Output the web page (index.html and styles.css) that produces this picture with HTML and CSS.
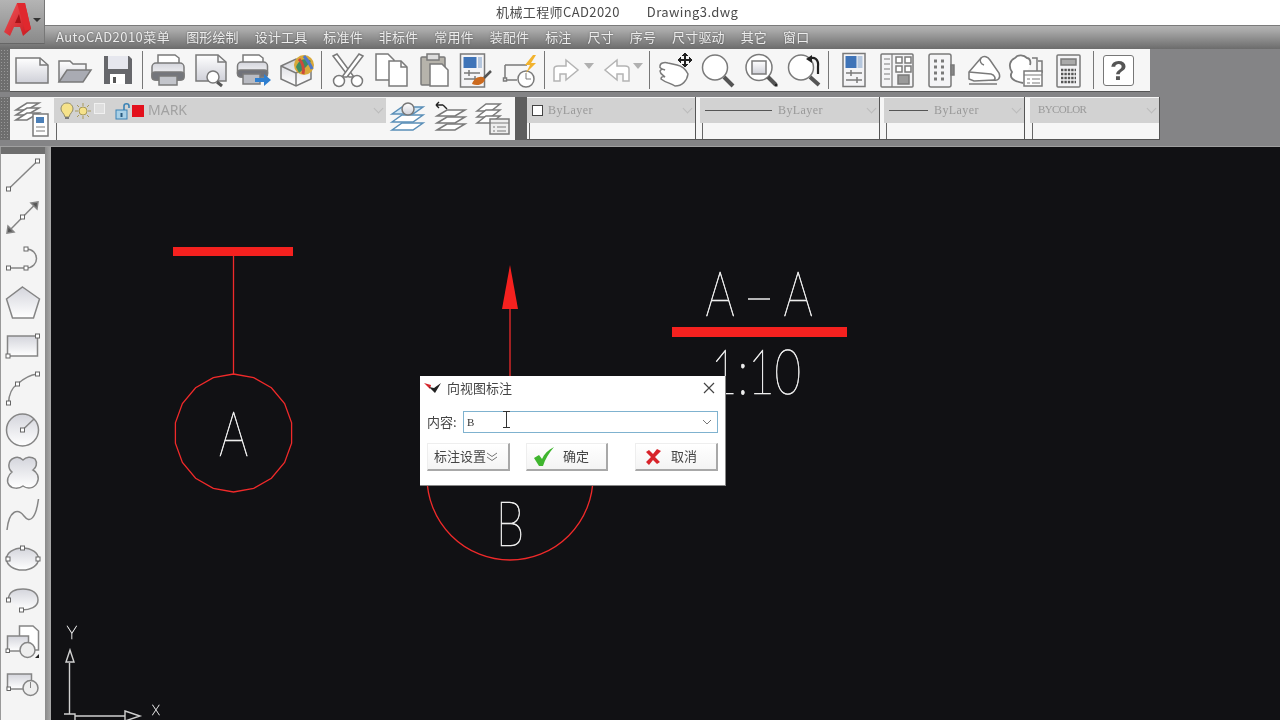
FILE: index.html
```html
<!DOCTYPE html>
<html lang="en">
<head>
    <meta charset="UTF-8">
    <title>机械工程师CAD2020</title>
    <link rel="stylesheet" href="styles.css">
</head>
<body>
<svg class="defs" width="0" height="0">
    <defs>
        <linearGradient id="sheet" x1="0" y1="0" x2="0" y2="1"><stop offset="0" stop-color="#fff"/><stop offset="1" stop-color="#cfd0d8"/></linearGradient>
        <linearGradient id="sheet2" x1="0" y1="0" x2="0" y2="1"><stop offset="0" stop-color="#d4d5dc"/><stop offset="1" stop-color="#fff"/></linearGradient>
        <linearGradient id="logo" x1="0" y1="0" x2="1" y2="1"><stop offset="0" stop-color="#f0565a"/><stop offset="1" stop-color="#c8181f"/></linearGradient>
    </defs>
</svg>
<div class="app">
    <div class="appbtn">
        <svg width="36" height="42" viewBox="0 0 36 42">
            <path d="M2 31L15 2H23L29 28L21 35L18 26H12L8 35Z" fill="url(#logo)"/>
            <path d="M15 2H23L29 28L23 30Z" fill="#e0282e"/>
            <path d="M13 22L17 13L19 22Z" fill="#a51319"/>
        </svg>
        <span class="appbtn-arrow"></span>
    </div>
    <header class="titlebar">
        <span>机械工程师CAD2020</span>
        <span>Drawing3.dwg</span>
    </header>
    <nav class="menubar">
        <span class="menu-first">AutoCAD2010菜单</span><span>图形绘制</span><span>设计工具</span><span>标准件</span><span>非标件</span><span>常用件</span><span>装配件</span><span>标注</span><span>尺寸</span><span>序号</span><span>尺寸驱动</span><span>其它</span><span>窗口</span>
    </nav>

    <div class="toolrow">
        <div class="grip"></div>
        <div class="toolbar tb-main">
            <!-- new -->
            <span class="tool"><svg class="ic" viewBox="0 0 34 34"><path d="M1 5H25L33 12V30H1Z" fill="url(#sheet)"/><path d="M25 5V12H33"/></svg></span>
            <!-- open -->
            <span class="tool"><svg class="ic" viewBox="0 0 34 34"><path d="M1 29V8H12L15 11H28V17" fill="url(#sheet)"/><path d="M1 29L9 17H33L25 29Z" fill="#a9abb3"/></svg></span>
            <!-- save -->
            <span class="tool"><svg viewBox="0 0 34 34"><path d="M3 3H28L31 6V31H3Z" fill="#66676b"/><rect x="7" y="3" width="20" height="13" fill="#e6e7ee"/><rect x="9" y="21" width="15" height="10" fill="#fff"/><rect x="12" y="24" width="3" height="6" fill="#555"/></svg></span>
            <span class="sep"></span>
            <!-- print -->
            <span class="tool"><svg class="ic" viewBox="0 0 34 34"><path d="M7 11V2H24L28 5V11" fill="#fff"/><rect x="1" y="10" width="32" height="17" rx="4" fill="url(#sheet2)"/><rect x="1" y="19" width="32" height="8" rx="3" fill="#74767c"/><rect x="8" y="23" width="18" height="9" fill="#c3c5cb"/></svg></span>
            <!-- preview -->
            <span class="tool"><svg class="ic" viewBox="0 0 34 34"><path d="M2 2H24L32 9V28H2Z" fill="url(#sheet)"/><path d="M24 2V9H32"/><circle cx="19" cy="24" r="6" fill="#fff"/><path d="M23 29L28 33" stroke="#555" stroke-width="3"/></svg></span>
            <!-- plot -->
            <span class="tool"><svg class="ic" viewBox="0 0 34 34"><path d="M6 10V2H22L26 5V10" fill="#fff"/><rect x="0.5" y="9" width="30" height="15" rx="4" fill="url(#sheet2)"/><rect x="0.5" y="17" width="30" height="7" rx="3" fill="#70727a"/><rect x="6" y="21" width="17" height="10" fill="#b9bbc2"/><path d="M18 25H27V21L34 27L27 33V29H18Z" fill="#2f7fd0" stroke="none"/></svg></span>
            <!-- 3d publish -->
            <span class="tool"><svg class="ic" viewBox="0 0 34 34"><path d="M1 13L16 6L31 13V26L16 33L1 26Z" fill="url(#sheet2)"/><path d="M1 13L16 20V33M16 20L31 13"/><circle cx="24" cy="12" r="10" fill="#d9a93a" stroke="none"/><path d="M16 14C20 4 28 6 31 8L26 14L19 20Z" fill="#3f8d63" stroke="none"/><path d="M19 6C23 10 24 16 23 21" stroke="#cc4a3c" stroke-width="3"/><path d="M24 3C28 8 31 13 32 16" stroke="#4f78c9" stroke-width="3"/></svg></span>
            <span class="sep sep-w"></span>
            <!-- cut -->
            <span class="tool"><svg class="ic" viewBox="0 0 34 34"><path d="M2 3L6 1L23 24H18Z" fill="#fff"/><path d="M32 3L28 1L11 24H16Z" fill="#fff"/><circle cx="8" cy="28" r="5.5" fill="#fff"/><circle cx="26" cy="28" r="5.5" fill="#fff"/></svg></span>
            <!-- copy -->
            <span class="tool"><svg class="ic" viewBox="0 0 34 34"><path d="M2 1H14L20 7V27H2Z" fill="#fff"/><path d="M15 8H27L33 14V33H15Z" fill="#fff"/><path d="M27 8V14H33"/></svg></span>
            <!-- paste -->
            <span class="tool"><svg class="ic" viewBox="0 0 34 34"><rect x="4" y="4" width="24" height="28" rx="1" fill="#b6b3ab"/><rect x="10" y="1" width="12" height="6" fill="#ddd"/><path d="M13 11H25L31 17V33H13Z" fill="#fff"/></svg></span>
            <!-- match properties -->
            <span class="tool"><svg class="ic" viewBox="0 0 34 34"><rect x="0.5" y="1" width="24" height="33" fill="#f4f4f6"/><rect x="3.5" y="4" width="13" height="11" fill="#3f74b8" stroke="none"/><rect x="18" y="4" width="4" height="11" fill="#b5c7de" stroke="none"/><path d="M4 20H20M4 26H20M9 17V23M15 23V29"/><path d="M12 31C14 25 20 22 25 25C25 30 19 34 12 31Z" fill="#cc6a1e" stroke="none"/><path d="M24 25L31 18" stroke="#555" stroke-width="2.5"/></svg></span>
            <!-- block -->
            <span class="tool"><svg class="ic" viewBox="0 0 34 34"><path d="M2 12H24M2 12V27H14"/><rect x="0.5" y="25" width="3" height="3" fill="#fff"/><circle cx="23" cy="26" r="8" fill="#fff"/><path d="M23 20V26H28" stroke-width="1"/><path d="M30 2L22 12H27L23 20L33 10H28L33 2Z" fill="#f2b32e" stroke="none"/></svg></span>
            <span class="sep"></span>
            <!-- redo / undo -->
            <span class="tool tool-sm"><svg class="ic ic-off" viewBox="0 0 34 34"><path d="M4 28V16C4 14 6 13 8 13H16V7L28 17L16 27V21H10V28Z" fill="#fff"/></svg></span>
            <span class="drop"></span>
            <span class="tool tool-sm"><svg class="ic ic-off" viewBox="0 0 34 34"><path d="M30 28V16C30 14 28 13 26 13H18V7L6 17L18 27V21H24V28Z" fill="#fff"/></svg></span>
            <span class="drop"></span>
            <span class="sep"></span>
            <!-- pan -->
            <span class="tool"><svg class="ic" viewBox="0 0 34 34"><path d="M2 13C2 10 6 9 10 10L19 12C24 13 28 17 30 21C29 28 24 33 17 33C13 30 8 30 3 26C3 24 5 23 7 24C5 22 2 21 2 18C3 16 5 16 7 17C4 16 1 15 2 13Z" fill="#fff"/><path d="M27 0V14M20 7H34" stroke="#222" stroke-width="2"/><path d="M24 3L27 0L30 3M24 11L27 14L30 11M23 4L20 7L23 10M31 4L34 7L31 10" stroke="#222" fill="#222" stroke-width="1"/></svg></span>
            <!-- zoom -->
            <span class="tool"><svg class="ic" viewBox="0 0 34 34"><circle cx="14" cy="14.5" r="12.5" fill="#fff"/><path d="M23 24L32 33" stroke="#555" stroke-width="4"/></svg></span>
            <!-- zoom window -->
            <span class="tool"><svg class="ic" viewBox="0 0 34 34"><circle cx="15" cy="14.5" r="13" fill="#fff"/><rect x="8" y="8" width="14" height="13" fill="url(#sheet)"/><path d="M24 24L32 32" stroke="#555" stroke-width="4"/><rect x="31" y="31" width="2.5" height="2.5" fill="#222" stroke="none"/></svg></span>
            <!-- zoom previous -->
            <span class="tool"><svg class="ic" viewBox="0 0 34 34"><circle cx="14" cy="14.5" r="12.5" fill="#fff"/><path d="M23 24L32 32" stroke="#555" stroke-width="4"/><path d="M22 6C27 3 32 6 31 14V21" stroke="#222" stroke-width="2.2"/><path d="M25 2L19 6L25 10Z" fill="#222" stroke="none"/></svg></span>
            <span class="sep"></span>
            <!-- properties -->
            <span class="tool"><svg class="ic" viewBox="0 0 34 34"><rect x="6" y="0.5" width="22" height="33" fill="#f4f4f6"/><rect x="8.5" y="3" width="11" height="12" fill="#3f74b8" stroke="none"/><rect x="20.5" y="3" width="5" height="12" fill="#b5c7de" stroke="none"/><path d="M9 20H25M9 27H25M14 17V23M20 24V30"/></svg></span>
            <!-- design center -->
            <span class="tool"><svg class="ic" viewBox="0 0 34 34"><rect x="1" y="1" width="32" height="33" rx="1" fill="#f4f4f6"/><path d="M12 1V34M4 6H10M4 11H10M4 16H10M4 21H10M4 26H10" stroke-width="1.2"/><rect x="16" y="4" width="6" height="6" fill="#fff"/><rect x="25" y="4" width="6" height="6" fill="#fff"/><rect x="16" y="13" width="6" height="6" fill="#fff"/><rect x="25" y="13" width="6" height="6" fill="#fff"/><rect x="18" y="22" width="11" height="9" fill="#9a9a9a"/></svg></span>
            <!-- tool palettes -->
            <span class="tool"><svg class="ic" viewBox="0 0 34 34"><rect x="6" y="1" width="22" height="33" rx="2" fill="#f4f4f6"/><path d="M28 12h3v10h-3z" fill="#888"/><path d="M11 8h3M18 8h3M11 14h3M18 14h3M11 20h3M18 20h3M11 26h3M18 26h3" stroke-width="3"/></svg></span>
            <!-- sheet set -->
            <span class="tool"><svg class="ic" viewBox="0 0 34 34"><path d="M3 19L15 5C18 2 22 4 24 7L33 20C35 25 32 28 28 27L8 28L3 26Z" fill="#fff"/><path d="M3 19L25 21C29 22 30 26 28 27M15 5C13 8 15 11 18 12"/><path d="M3 31H31"/></svg></span>
            <!-- markup -->
            <span class="tool"><svg class="ic" viewBox="0 0 34 34"><path d="M14 30C3 28 0 24 3 19C-1 13 1 7 6 5C9 1 15 2 18 5C21 5 22 9 21 12" fill="#fff" stroke-width="1.8"/><path d="M23 5H28V20M29 8H33V20"/><rect x="15" y="18" width="18" height="15" fill="#fff"/><path d="M15 22H33M18 26H21M23 26H31M18 30H21M23 30H31" stroke-width="1.2"/></svg></span>
            <!-- calculator -->
            <span class="tool"><svg class="ic" viewBox="0 0 34 34"><rect x="5" y="2" width="23" height="32" rx="1" fill="#f4f4f6"/><rect x="9" y="6" width="15" height="6" fill="#aaa"/><path d="M9 17H24M9 21H24M9 25H24M9 29H24" stroke="#555" stroke-width="2.4" stroke-dasharray="2.4 1"/></svg></span>
            <span class="sep"></span>
            <!-- help -->
            <span class="tool"><span class="help">?</span></span>
        </div>
    </div>

    <div class="toolrow toolrow-2">
        <div class="grip"></div>
        <div class="toolbar tb-layer">
            <span class="tool-tight"><svg class="ic" viewBox="0 0 34 34"><path d="M1 8L12 1H24L12 8Z" fill="#fff"/><path d="M1 13L12 6H24L12 13Z" fill="#fff"/><path d="M1 18L12 11H24L12 18Z" fill="#fff"/><rect x="18" y="12" width="15" height="22" fill="#fff"/><rect x="21" y="15" width="8" height="6" fill="#4c80b8" stroke="none"/><path d="M21 25H30M21 29H30" stroke-width="1.2"/></svg></span>
            <div class="combo combo-layer">
                <div class="combo-top">
                    <svg class="flag" width="16" height="18" viewBox="0 0 16 18"><path d="M8 1C12 1 14 4 14 7C14 10 11 11 10 15H6C5 11 2 10 2 7C2 4 4 1 8 1Z" fill="#f6e28a" stroke="#8f8a6a"/><rect x="6" y="15" width="4" height="2" fill="#777"/></svg>
                    <svg class="flag" width="16" height="18" viewBox="0 0 16 18"><circle cx="8" cy="9" r="4" fill="#f6e28a" stroke="#a89a5a"/><path d="M8 1V4M8 14V17M0 9H3M13 9H16M2 3L4 5M12 13L14 15M14 3L12 5M4 13L2 15" stroke="#a89a5a"/></svg>
                    <span class="flag-box"></span>
                    <svg class="flag flag-lock" width="16" height="18" viewBox="0 0 16 18"><path d="M9 8V4C9 1 14 1 14 4V6" fill="none" stroke="#3a82b5" stroke-width="1.6"/><rect x="1" y="8" width="11" height="9" fill="#a9d0e6" stroke="#3a82b5"/><rect x="5.5" y="11" width="2" height="4" fill="#28597d"/></svg>
                    <span class="swatch-red"></span>
                    <span class="layer-name">MARK</span>
                    <span class="chev"></span>
                </div>
                <div class="combo-low"></div>
            </div>
            <span class="tool-tight tt-first"><svg class="ic ic-blue" viewBox="0 0 34 34"><path d="M2 12L12 5H33L23 12Z" fill="#cfe6f6"/><path d="M2 20L12 13H33L23 20Z" fill="#fff"/><path d="M2 28L12 21H33L23 28Z" fill="#fff"/><circle cx="18" cy="7" r="6" fill="url(#sheet)" stroke="#777"/></svg></span>
            <span class="tool-tight"><svg class="ic" viewBox="0 0 34 34"><path d="M4 14L14 8H32L22 14Z" fill="#fff"/><path d="M4 21L14 15H32L22 21Z" fill="#fff"/><path d="M4 28L14 22H32L22 28Z" fill="#fff"/><path d="M3 3H10M3 3L6 0M3 3L6 6M10 3L14 7" stroke="#222" stroke-width="1.4"/></svg></span>
            <span class="tool-tight"><svg class="ic" viewBox="0 0 34 34"><path d="M1 9L10 2H24L15 9Z" fill="#fff"/><path d="M1 15L10 8H24L15 15Z" fill="#fff"/><path d="M1 21L10 14H24L15 21Z" fill="#fff"/><rect x="14" y="17" width="19" height="15" fill="#eee"/><path d="M14 21H33M17 25H19M21 25H30M17 29H19M21 29H30" stroke-width="1.2"/></svg></span>
        </div>
        <div class="grip grip-dark"></div>
        <div class="combos">
            <div class="combo combo-1">
                <div class="combo-top"><span class="box"></span><span class="combo-text">ByLayer</span><span class="chev"></span></div>
                <div class="combo-low"></div>
            </div>
            <div class="combo combo-2">
                <div class="combo-top"><span class="ltype ltype-long"></span><span class="combo-text">ByLayer</span><span class="chev"></span></div>
                <div class="combo-low"></div>
            </div>
            <div class="combo combo-3">
                <div class="combo-top"><span class="ltype ltype-short"></span><span class="combo-text">ByLayer</span><span class="chev"></span></div>
                <div class="combo-low"></div>
            </div>
            <div class="combo combo-4">
                <div class="combo-top"><span class="combo-text combo-text-big">BYCOLOR</span><span class="chev"></span></div>
                <div class="combo-low"></div>
            </div>
        </div>
    </div>

    <div class="workspace">
        <aside class="sidebar">
            <div class="side-grip"></div>
            <span class="side-tool"><svg class="ic ic-thin" viewBox="0 0 34 34"><path d="M2.5 31L31.5 3"/><rect class="h" x="0.5" y="29" width="4" height="4"/><rect class="h" x="29.5" y="1" width="4" height="4"/></svg></span>
            <span class="side-tool"><svg class="ic ic-thin" viewBox="0 0 34 34"><path d="M2 31L31.5 1"/><path d="M1 32L2 25L8 31Z" fill="#555"/><path d="M32 1L31 8L25 2Z" fill="#555"/><rect class="h" x="14.5" y="14" width="4" height="4"/></svg></span>
            <span class="side-tool"><svg class="ic ic-thin" viewBox="0 0 34 34"><path d="M2.5 25H20C34 25 34 6 20 6"/><rect class="h" x="0.5" y="23" width="4" height="4"/><rect class="h" x="18" y="23" width="4" height="4"/><rect class="h" x="18" y="4" width="4" height="4"/></svg></span>
            <span class="side-tool"><svg class="ic ic-thin" viewBox="0 0 34 34"><path d="M16.5 1L33.5 13L27.5 32H6.5L0.5 13Z" fill="url(#sheet2)"/></svg></span>
            <span class="side-tool"><svg class="ic ic-thin" viewBox="0 0 34 34"><rect x="1.5" y="8" width="30" height="20" fill="url(#sheet2)"/><rect class="h" x="29.5" y="6" width="4" height="4"/><rect class="h" x="0" y="26" width="4" height="4"/></svg></span>
            <span class="side-tool"><svg class="ic ic-thin" viewBox="0 0 34 34"><path d="M2.5 32C3 22 7 16 11.5 13C17 8 23 4 31.5 3"/><rect class="h" x="0.5" y="30" width="4" height="4"/><rect class="h" x="9.5" y="11" width="4" height="4"/><rect class="h" x="29.5" y="1" width="4" height="4"/></svg></span>
            <span class="side-tool"><svg class="ic ic-thin" viewBox="0 0 34 34"><circle cx="16.5" cy="17" r="16" fill="url(#sheet2)"/><path d="M16.5 17L28 6"/><rect class="h" x="14.5" y="15" width="4" height="4"/></svg></span>
            <span class="side-tool"><svg class="ic ic-thin" viewBox="0 0 34 34"><path d="M8 2C12 0 15 2 17 4C20 1 25 0 29 3C32 7 30 12 27 14C31 16 34 21 31 27C28 33 21 33 17 30C13 33 6 33 3 29C0 25 2 19 6 16C2 13 1 5 8 2Z" fill="url(#sheet2)"/></svg></span>
            <span class="side-tool"><svg class="ic ic-thin" viewBox="0 0 34 34"><path d="M1 32C3 12 12 10 18 18C24 26 30 20 32.5 1"/></svg></span>
            <span class="side-tool"><svg class="ic ic-thin" viewBox="0 0 34 34"><ellipse cx="16.5" cy="18" rx="16" ry="11" fill="url(#sheet2)"/><rect class="h" x="14.5" y="5" width="4" height="4"/><rect class="h" x="0" y="16" width="4" height="4"/><rect class="h" x="30" y="16" width="4" height="4"/></svg></span>
            <span class="side-tool"><svg class="ic ic-thin" viewBox="0 0 34 34"><path d="M2.5 17C2 8 10 6 17 6C26 6 32 10 32 17C32 24 24 27 15.5 27" fill="url(#sheet2)"/><rect class="h" x="0.5" y="15" width="4" height="4"/><rect class="h" x="13.5" y="25" width="4" height="4"/></svg></span>
            <span class="side-tool"><svg class="ic ic-thin" viewBox="0 0 34 34"><path d="M13.5 0H27L32.5 5V24H13.5Z" fill="#fff"/><rect x="1.5" y="10" width="21" height="15" fill="url(#sheet2)"/><circle cx="21.5" cy="24" r="7.5" fill="#eee"/><rect class="h" x="0" y="23" width="3.5" height="3.5"/><path d="M29 32H33V28Z" fill="#222" stroke="none"/></svg></span>
            <span class="side-tool"><svg class="ic ic-thin" viewBox="0 0 34 34"><rect x="1.5" y="6" width="24" height="15" fill="url(#sheet2)"/><circle cx="24.5" cy="20" r="7.5" fill="#eee"/><path d="M24.5 20V14" stroke-width="1"/><rect class="h" x="1" y="19" width="3.5" height="3.5"/></svg></span>
        </aside>
        <div class="rail"></div>
        <main class="canvas">
            <svg class="drawing" viewBox="51 147 1229 573">
                <!-- section A -->
                <rect class="red-fill" x="173" y="247" width="120" height="9"/>
                <path class="red" d="M233.5 256V375"/>
                <polygon class="red" transform="translate(233.5 433)" points="0,-59 20.2,-55.4 37.9,-45.2 51.1,-29.5 58.1,-10.2 58.1,10.2 51.1,29.5 37.9,45.2 20.2,55.4 0,59 -20.2,55.4 -37.9,45.2 -51.1,29.5 -58.1,10.2 -58.1,-10.2 -51.1,-29.5 -37.9,-45.2 -20.2,-55.4"/>
                <text class="cad" transform="translate(233.5 456) scale(.74 1)">A</text>
                <!-- view B -->
                <path class="red-fill" d="M510 265L518 309H502Z"/>
                <path class="red" d="M510 309V380"/>
                <circle class="red" cx="510" cy="477" r="83"/>
                <text class="cad" transform="translate(510 546) scale(.74 1)">B</text>
                <!-- A-A label -->
                <text class="cad" transform="translate(720 316) scale(.74 1)">A</text>
                <path class="white" d="M748 299H770"/>
                <text class="cad" transform="translate(798 316) scale(.74 1)">A</text>
                <rect class="red-fill" x="672" y="327" width="175" height="10"/>
                <text class="cad" transform="translate(756 394) scale(.74 1)">1:10</text>
                <!-- ucs -->
                <text class="cad cad-sm" x="72" y="639">Y</text>
                <path class="ucs" d="M69.5 663V714M66 662L70 650L74 662ZM64 714H75V720M75 716H125M125 711L140 716L125 721Z"/>
                <text class="cad cad-sm cad-x" x="156" y="715">X</text>
            </svg>
            <section class="dialog">
                <div class="dlg-title">
                    <svg width="18" height="12" viewBox="0 0 18 12"><path d="M0 1L7 3L6 7Z" fill="#d6242a"/><path d="M5 5L10 6L17 1L11 11Z" fill="#222"/></svg>
                    <span>向视图标注</span>
                    <svg class="dlg-close" width="12" height="12" viewBox="0 0 12 12"><path d="M1 1L11 11M11 1L1 11" stroke="#444" stroke-width="1.2"/></svg>
                </div>
                <div class="dlg-row">
                    <label>内容:</label>
                    <div class="dlg-input">
                        <span class="dlg-value">B</span>
                        <svg class="ibeam" width="9" height="17" viewBox="0 0 9 17"><path d="M1 .5H8M4.5 .5V16.5M1 16.5H8" stroke="#333" fill="none"/></svg>
                        <svg class="dlg-chev" width="10" height="6" viewBox="0 0 10 6"><path d="M1 1L5 5L9 1" stroke="#777" fill="none"/></svg>
                    </div>
                </div>
                <div class="dlg-btns">
                    <div class="btn btn-set"><span class="btn-label">标注设置</span><svg width="12" height="10" viewBox="0 0 12 10"><path d="M1 1L6 4.5L11 1M1 5L6 8.5L11 5" stroke="#777" fill="none"/></svg></div>
                    <div class="btn btn-ok"><svg width="20" height="19" viewBox="0 0 20 19"><path d="M0 11L5 8L8 12C10 7 14 3 20 0C15 6 11 12 9 19H5Z" fill="#3fb52e"/></svg><span class="btn-label">确定</span></div>
                    <div class="btn btn-cancel"><svg width="16" height="16" viewBox="0 0 16 16"><path d="M1 3L4 1L8 5L12 0L16 2L10 8L15 13L12 15L8 11L4 16L1 13L6 8Z" fill="#d8232a"/></svg><span class="btn-label">取消</span></div>
                </div>
            </section>
        </main>
    </div>
</div>
</body>
</html>
```

FILE: styles.css
```css
* {
    box-sizing: border-box;
}
html, body {
    margin: 0;
    padding: 0;
}
body {
    width: 1280px;
    height: 720px;
    overflow: hidden;
    background: #111114;
    font-family: "Noto Sans CJK SC", "Noto Sans", sans-serif;
}
.defs {
    position: absolute;
}
.app {
    position: relative;
    display: flex;
    flex-direction: column;
    width: 1280px;
    height: 720px;
    background: #848486;
    filter: blur(0.5px);
}

/* title + menu */
.appbtn {
    position: absolute;
    left: 0;
    top: 0;
    width: 45px;
    height: 44px;
    padding: 1px 0 0 2px;
    background: linear-gradient(#b4b4b4, #8a8a8a);
    border-right: 1px solid #777;
    border-bottom: 1px solid #666;
}
.appbtn-arrow {
    position: absolute;
    left: 33px;
    top: 18px;
    border: 4px solid transparent;
    border-top: 4px solid #333;
}
.titlebar {
    display: flex;
    justify-content: flex-start;
    gap: 27px;
    height: 26px;
    padding: 2px 0 0 496px;
    background: #fff;
    border-bottom: 1px solid #7a7a7a;
    color: #4a4a4a;
    font-size: 13px;
    line-height: 20px;
    letter-spacing: 0.4px;
    white-space: nowrap;
}
.menubar {
    display: flex;
    gap: 16px;
    height: 23px;
    padding-left: 56px;
    background: linear-gradient(#b2b2b2, #a8a8a8 20%, #6c6c6c);
    color: #ececec;
    font-size: 13px;
    line-height: 22px;
    letter-spacing: 0.15px;
    text-shadow: 0 0 2px #555;
    white-space: nowrap;
}
.menu-first {
    letter-spacing: 0.45px;
}

/* toolbars */
.toolrow {
    display: flex;
    height: 48px;
    padding-bottom: 5px;
}
.toolrow-2 {
    height: 50px;
    padding-bottom: 6px;
    border-bottom: 1px solid #a0a0a0;
}
.grip {
    width: 10px;
    background: #6e6e6e;
    background-image: radial-gradient(#999 40%, transparent 45%);
    background-size: 3px 3px;
}
.grip-dark {
    width: 12px;
    background: #5e5e5e;
}
.toolbar {
    display: flex;
    align-items: center;
    background: #f6f6f6;
}
.tb-main {
    width: 1140px;
    border-bottom: 1px solid #555;
}
.tb-layer {
    width: 505px;
    padding-left: 5px;
}
.tool {
    display: flex;
    justify-content: center;
    width: 43px;
}
.tool svg, .tool-tight svg, .side-tool svg {
    display: block;
    width: 34px;
    height: 34px;
    overflow: visible;
}
.tool-sm {
    width: 37px;
}
.tool-tight {
    margin-left: 9px;
}
.tool-tight:first-child {
    margin-left: 0;
}
.tt-first {
    margin-left: 4px;
}
.ic {
    fill: none;
    stroke: #7a7a7a;
    stroke-width: 1.5;
}
.ic-thin {
    stroke: #858585;
    stroke-width: 1.5;
}
.ic-thin .h {
    fill: #fff;
    stroke: #666;
    stroke-width: 1;
}
.ic-off {
    stroke: #b4b4b4;
}
.ic-blue {
    stroke: #5a8fb8;
}
.sep {
    width: 1px;
    height: 38px;
    margin: 0 3px;
    background: #777;
}
.sep-w {
    margin: 0 4px 0 3px;
}
.drop {
    width: 0;
    height: 0;
    margin: -8px 3px 0 -1px;
    border: 5px solid transparent;
    border-top: 6px solid #b0b0b0;
    border-bottom: 0;
}
.help {
    display: block;
    width: 31px;
    height: 31px;
    border: 1.5px solid #777;
    border-radius: 3px;
    background: #fff;
    color: #555;
    font-family: "Liberation Sans", sans-serif;
    font-size: 28px;
    font-weight: bold;
    line-height: 29px;
    text-align: center;
}

/* combos */
.combos {
    display: flex;
    width: 633px;
    background: #f6f6f6;
    border-right: 1px solid #555;
    border-bottom: 1px solid #555;
}
.combo {
    flex: none;
    display: flex;
    flex-direction: column;
    height: 100%;
}
.combo-layer {
    width: 332px;
    margin-left: 5px;
}
.combo-1, .combo-2, .combo-3 {
    border-right: 1px solid #555;
}
.combo-1 {
    width: 169px;
}
.combo-2 {
    width: 180px;
    margin-left: 4px;
}
.combo-3 {
    width: 141px;
    margin-left: 4px;
}
.combo-4 {
    width: 129px;
    margin-left: 5px;
}
.combo-top {
    display: flex;
    align-items: center;
    flex: none;
    height: 25px;
    margin-top: 1px;
    padding-left: 5px;
    background: #d2d2d2;
}
.combo-low {
    flex: 1;
    margin-left: 2px;
    border-left: 1px solid #666;
}
.chev {
    width: 7px;
    height: 7px;
    margin: -5px 4px 0 auto;
    border-right: 1px solid #bbb;
    border-bottom: 1px solid #bbb;
    transform: rotate(45deg);
}
.combo-text {
    color: #999;
    font-family: "Liberation Serif", "DejaVu Serif", serif;
    font-size: 12px;
    letter-spacing: 0.4px;
}
.combo-text-big {
    margin: -3px 0 0 3px;
    font-size: 11px;
    letter-spacing: -0.6px;
}
.box {
    width: 11px;
    height: 11px;
    margin-right: 5px;
    background: #fff;
    border: 1px solid #444;
}
.ltype {
    height: 1px;
    margin-right: 6px;
    background: #555;
}
.ltype-long {
    width: 67px;
}
.ltype-short {
    width: 39px;
}
.flag {
    flex: none;
}
.flag-box {
    flex: none;
    width: 11px;
    height: 11px;
    margin: -4px 8px 0 3px;
    background: #dedede;
    border: 1px solid #f0f0f0;
}
.flag-lock {
    margin-left: 2px;
}
.swatch-red {
    flex: none;
    width: 12px;
    height: 12px;
    margin-left: 1px;
    background: #e3101c;
}
.layer-name {
    margin: -2px 0 0 4px;
    color: #a2a2a2;
    font-family: "Noto Sans", sans-serif;
    font-size: 14px;
}

/* workspace */
.workspace {
    flex: 1;
    display: flex;
    min-height: 0;
}
.sidebar {
    display: flex;
    flex-direction: column;
    flex: none;
    width: 45px;
    background: #f4f4f4;
    border-left: 1px solid #999;
}
.side-grip {
    flex: none;
    height: 7px;
    background: #6e6e6e;
}
.side-tool {
    flex: none;
    display: flex;
    align-items: center;
    justify-content: center;
    height: 42.5px;
}
.rail {
    flex: none;
    width: 6px;
    background: linear-gradient(90deg, #8a8a8a, #a8a8a8);
}
.canvas {
    position: relative;
    flex: 1;
    background: #111114;
    overflow: hidden;
}
.drawing {
    display: block;
    width: 1229px;
    height: 573px;
}
.red {
    fill: none;
    stroke: #f02a2a;
    stroke-width: 1.3;
}
.red-fill {
    fill: #f5211f;
}
.white {
    fill: none;
    stroke: #e0e0e0;
    stroke-width: 1.6;
}
.ucs {
    fill: none;
    stroke: #d0d0d0;
    stroke-width: 1.4;
}
.cad {
    fill: #eee;
    stroke: #eee;
    stroke-width: 0.7;
    font-family: "Lato", "Liberation Sans", sans-serif;
    font-size: 62px;
    font-weight: 100;
    text-anchor: middle;
}
.cad-sm {
    stroke-width: 0.5;
    font-size: 18px;
}
.cad-x {
    font-size: 13px;
}

/* dialog */
.dialog {
    position: absolute;
    left: 369px;
    top: 229px;
    width: 306px;
    height: 110px;
    padding: 0 7px 0 7px;
    background: #fff;
    border-right: 1px solid #888;
    border-bottom: 1px solid #888;
    color: #444;
    font-size: 13px;
}
.dlg-title {
    display: flex;
    align-items: center;
    gap: 5px;
    height: 26px;
    margin-left: -3px;
    padding-bottom: 3px;
}
.dlg-close {
    margin: 0 3px 0 auto;
}
.dlg-row {
    display: flex;
    align-items: center;
    gap: 6px;
    height: 22px;
    margin-top: 9px;
}
.dlg-row label {
    width: 30px;
    margin-top: -2px;
}
.dlg-input {
    position: relative;
    display: flex;
    align-items: center;
    flex: 1;
    height: 22px;
    padding: 0 5px 0 3px;
    border: 1px solid #7fb2cf;
}
.dlg-value {
    color: #333;
    font-family: "Liberation Serif", serif;
    font-size: 11px;
}
.ibeam {
    position: absolute;
    left: 38px;
    top: -1px;
}
.dlg-chev {
    margin-left: auto;
}
.dlg-btns {
    display: flex;
    margin-top: 10px;
}
.btn {
    display: flex;
    align-items: center;
    height: 28px;
    background: linear-gradient(#fff, #f4f4f4);
    border-right: 2px solid #a8a8a8;
    border-bottom: 2px solid #a8a8a8;
    border-top: 1px solid #eee;
    border-left: 1px solid #eee;
    color: #444;
    font-size: 13px;
}
.btn-label {
    margin-top: -3px;
}
.btn-set {
    width: 83px;
    padding-left: 6px;
}
.btn-ok {
    width: 82px;
    margin-left: 16px;
    padding-left: 7px;
    gap: 9px;
}
.btn-cancel {
    width: 83px;
    margin-left: 27px;
    padding-left: 9px;
    gap: 10px;
}
```
